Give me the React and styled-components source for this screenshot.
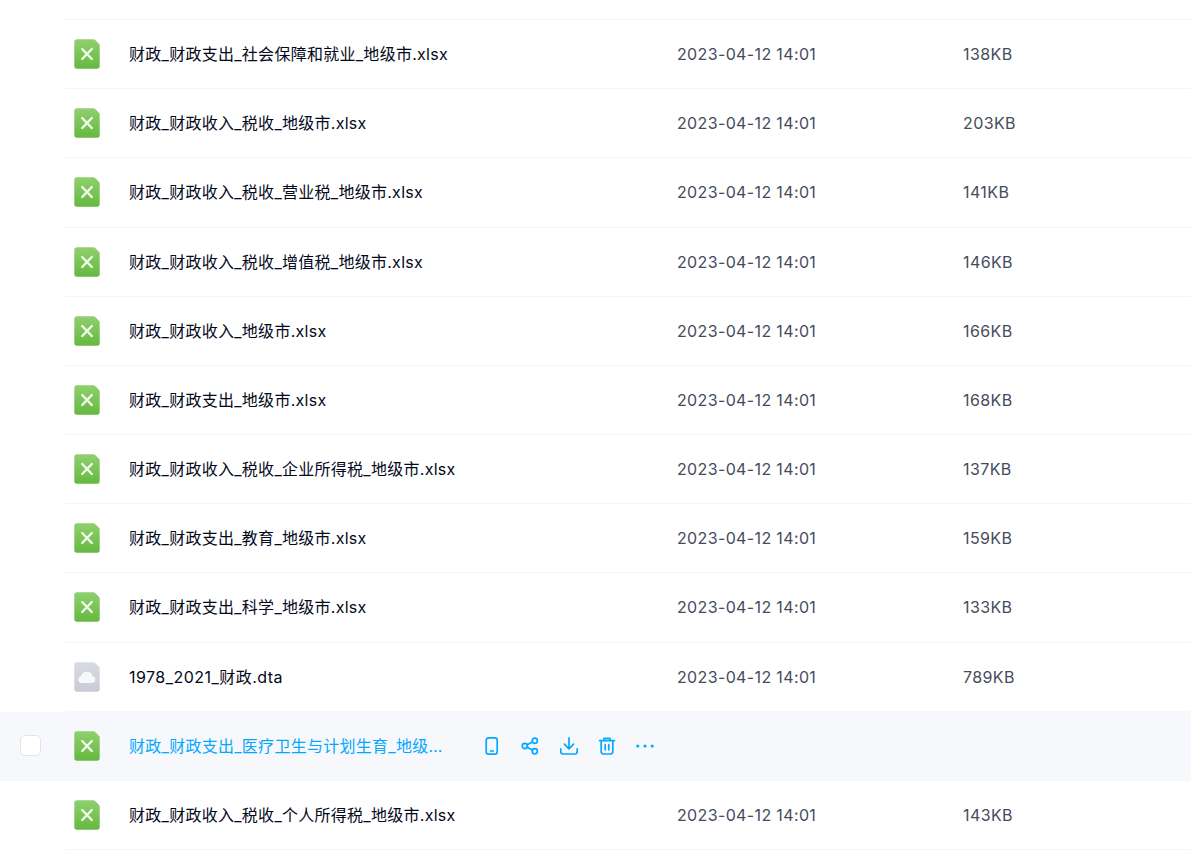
import styled, { createGlobalStyle } from "styled-components";

const GlobalStyle = createGlobalStyle`
  html, body {
    margin: 0;
    padding: 0;
    background: #fff;
    overflow: hidden;
  }
  body {
    font-family: Inter, "Noto Sans CJK SC", sans-serif;
  }
`;

const Page = styled.div`
  height: 857px;
  overflow: hidden;
  padding-top: 19px;
`;

const TopLine = styled.div`
  height: 1px;
  margin-left: 65px;
  background: #f4f4f6;
`;

const Row = styled.div`
  display: flex;
  align-items: stretch;
  height: 69.18px;
  padding-left: 65px;
  background: ${(p) => (p.$active ? "#f7f8fc" : "#fff")};
  position: relative;
`;

const RowInner = styled.div`
  flex: 1;
  display: flex;
  align-items: center;
  border-bottom: 1px solid ${(p) => (p.$hoverEdge ? "#f7f8fc" : "#f4f4f6")};
  padding-left: 9px;
`;

const Check = styled.span`
  position: absolute;
  left: 20px;
  top: 23px;
  width: 19px;
  height: 19px;
  border: 1px solid #e2e4ec;
  border-radius: 5px;
  background: #fff;
`;

const IconBox = styled.span`
  display: flex;
  width: 26px;
  height: 30px;
  flex: none;
`;

const Name = styled.div`
  width: 316px;
  margin-left: 29px;
  flex: none;
  font-size: 16px;
  line-height: 20px;
  letter-spacing: ${(p) => p.$spacing || 0.28}px;
  color: ${(p) => (p.$active ? "#06a7ff" : "#03081a")};
  white-space: nowrap;
  overflow: hidden;
  text-overflow: ellipsis;
`;

const NameWide = styled(Name)`
  width: 548px;
`;

const Actions = styled.div`
  display: flex;
  align-items: center;
  margin-left: 37px;
  color: #06a7ff;
`;

const ActionButton = styled.span`
  display: flex;
  width: 20px;
  height: 20px;
  margin-right: ${(p) => p.$gap}px;
`;

const DateCell = styled.div`
  width: 286px;
  flex: none;
  font-size: 16px;
  line-height: 20px;
  letter-spacing: 0.36px;
  color: #454b5c;
`;

const SizeCell = styled.div`
  font-size: 16px;
  line-height: 20px;
  letter-spacing: 0.4px;
  color: #454b5c;
`;

const docPath =
  "M3 0.3H19.4Q20.4 0.3 21.2 1.1L24.9 4.8Q25.7 5.6 25.7 6.6V27A2.7 2.7 0 0 1 23 29.7H3A2.7 2.7 0 0 1 0.3 27V3A2.7 2.7 0 0 1 3 0.3Z";

const ExcelIcon = ({ id }) => (
  <svg width="26" height="30" viewBox="0 0 26 30">
    <defs>
      <linearGradient id={id} x1="0" y1="0" x2="0" y2="1">
        <stop offset="0" stopColor="#90cf70" />
        <stop offset="1" stopColor="#65b93f" />
      </linearGradient>
    </defs>
    <path d={docPath} fill={`url(#${id})`} />
    <path d="M8.2 10L17.8 20M17.8 10L8.2 20" stroke="#f1faea" strokeWidth="2.4" strokeLinecap="round" fill="none" />
  </svg>
);

const CloudIcon = () => (
  <svg width="26" height="30" viewBox="0 0 26 30">
    <defs>
      <linearGradient id="grayDoc" x1="0" y1="0" x2="0" y2="1">
        <stop offset="0" stopColor="#d9dbe3" />
        <stop offset="1" stopColor="#c8cbd5" />
      </linearGradient>
    </defs>
    <path d={docPath} fill="url(#grayDoc)" />
    <path
      d="M7.6 21A3.4 3.4 0 0 1 7 14.3A6 6 0 0 1 18.6 14.3A3.4 3.4 0 0 1 18.2 21Z"
      fill="#f8f8fb"
    />
  </svg>
);

const stroke = {
  fill: "none",
  stroke: "currentColor",
  strokeWidth: 1.7,
  strokeLinecap: "round",
  strokeLinejoin: "round",
};

const PhoneIcon = () => (
  <svg width="20" height="20" viewBox="0 0 20 20" {...stroke}>
    <rect x="4.2" y="1.8" width="11" height="16.4" rx="2.4" />
    <path d="M8.4 15H11.4" />
  </svg>
);

const ShareIcon = () => (
  <svg width="20" height="20" viewBox="0 0 20 20" {...stroke}>
    <circle cx="4.8" cy="10" r="2.6" />
    <circle cx="14.8" cy="4.8" r="2.6" />
    <circle cx="14.8" cy="15.2" r="2.6" />
    <path d="M7.2 8.8L12.4 6M7.2 11.2L12.4 14" />
  </svg>
);

const DownloadIcon = () => (
  <svg width="20" height="20" viewBox="0 0 20 20" {...stroke}>
    <path d="M10 1.8V12.6M5.4 8.2L10 12.8L14.6 8.2" />
    <path d="M1.8 12.8V15.8A2.2 2.2 0 0 0 4 18H16A2.2 2.2 0 0 0 18.2 15.8V12.8" />
  </svg>
);

const TrashIcon = () => (
  <svg width="20" height="20" viewBox="0 0 20 20" {...stroke}>
    <path d="M2.6 4.6H17.4M7 4.4V2.4H13V4.4" />
    <path d="M4.2 4.8V15.8A2.2 2.2 0 0 0 6.4 18H13.6A2.2 2.2 0 0 0 15.8 15.8V4.8" />
    <path d="M8.2 8.6V13.8M11.8 8.6V13.8" />
  </svg>
);

const DotsIcon = () => (
  <svg width="20" height="20" viewBox="0 0 20 20" fill="currentColor">
    <circle cx="2.8" cy="10" r="1.6" />
    <circle cx="10" cy="10" r="1.6" />
    <circle cx="17.2" cy="10" r="1.6" />
  </svg>
);

const files = [
  ["财政_财政支出_社会保障和就业_地级市.xlsx", "138KB"],
  ["财政_财政收入_税收_地级市.xlsx", "203KB"],
  ["财政_财政收入_税收_营业税_地级市.xlsx", "141KB"],
  ["财政_财政收入_税收_增值税_地级市.xlsx", "146KB"],
  ["财政_财政收入_地级市.xlsx", "166KB"],
  ["财政_财政支出_地级市.xlsx", "168KB"],
  ["财政_财政收入_税收_企业所得税_地级市.xlsx", "137KB"],
  ["财政_财政支出_教育_地级市.xlsx", "159KB"],
  ["财政_财政支出_科学_地级市.xlsx", "133KB"],
  ["1978_2021_财政.dta", "789KB", "cloud"],
  ["财政_财政支出_医疗卫生与计划生育_地级市.xlsx", "", "active"],
  ["财政_财政收入_税收_个人所得税_地级市.xlsx", "143KB"],
];

const App = () => {
  return (
    <>
      <GlobalStyle />
      <Page>
        <TopLine />
        {files.map(([name, size, kind], i) => {
          const active = kind === "active";
          const beforeActive = files[i + 1] && files[i + 1][2] === "active";
          return (
            <Row key={name} $active={active}>
              {active && <Check />}
              <RowInner $hoverEdge={active || beforeActive}>
                <IconBox>{kind === "cloud" ? <CloudIcon /> : <ExcelIcon id={`xls${i}`} />}</IconBox>
                {active ? (
                  <>
                    <Name $active>{name}</Name>
                    <Actions>
                      <ActionButton $gap={17.5}><PhoneIcon /></ActionButton>
                      <ActionButton $gap={19.5}><ShareIcon /></ActionButton>
                      <ActionButton $gap={17.5}><DownloadIcon /></ActionButton>
                      <ActionButton $gap={18.5}><TrashIcon /></ActionButton>
                      <ActionButton $gap={0}><DotsIcon /></ActionButton>
                    </Actions>
                  </>
                ) : (
                  <>
                    <NameWide $spacing={kind === "cloud" ? 0.47 : undefined}>{name}</NameWide>
                    <DateCell>2023-04-12 14:01</DateCell>
                    <SizeCell>{size}</SizeCell>
                  </>
                )}
              </RowInner>
            </Row>
          );
        })}
      </Page>
    </>
  );
};

export default App;
